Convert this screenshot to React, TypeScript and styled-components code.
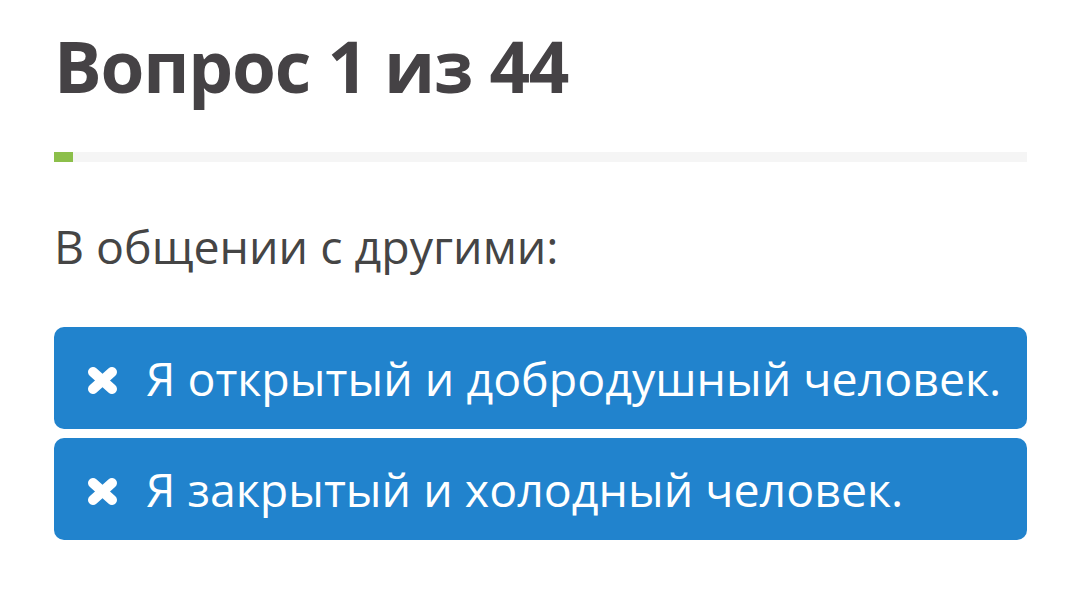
import React from "react";
import styled, { createGlobalStyle } from "styled-components";

const Global = createGlobalStyle`
  html, body { margin: 0; padding: 0; background: #ffffff; }
  body { font-family: "Open Sans", "Noto Sans", sans-serif; }
`;

const Page = styled.div`
  padding: 23px 53px 0 54px;
  display: flex;
  flex-direction: column;
`;

const Title = styled.h1`
  margin: 0;
  font-size: 71px;
  font-weight: 700;
  line-height: 86px;
  letter-spacing: -1.2px;
  color: #454245;
`;

const Track = styled.div`
  margin-top: 43px;
  height: 10px;
  background: #f5f5f5;
  display: flex;
`;

const Fill = styled.div`
  height: 100%;
  background: #8cbf4a;
`;

const Question = styled.p`
  margin: 50px 0 0 0;
  font-size: 46.5px;
  font-weight: 400;
  line-height: 68px;
  color: #454545;
`;

const Answers = styled.div`
  margin-top: 47px;
  display: flex;
  flex-direction: column;
  gap: 9px;
`;

const Answer = styled.button`
  height: 102px;
  border: none;
  border-radius: 10px;
  background: #2183cd;
  color: #ffffff;
  display: flex;
  align-items: center;
  padding: 0 0 0 33px;
  font-family: "Open Sans", "Noto Sans", sans-serif;
  font-size: 46.5px;
  font-weight: 400;
  text-align: left;
  cursor: pointer;
`;

const Icon = styled.svg`
  width: 31px;
  height: 29px;
  margin-right: 28px;
  margin-top: 4px;
  flex-shrink: 0;
`;

const CrossIcon = () => (
  <Icon viewBox="0 0 31 29">
    <g stroke="#ffffff" strokeWidth="10" strokeLinecap="round">
      <line x1="6" y1="6" x2="25" y2="23" />
      <line x1="25" y1="6" x2="6" y2="23" />
    </g>
  </Icon>
);

const answers = [
  "Я открытый и добродушный человек.",
  "Я закрытый и холодный человек.",
];

export default function App() {
  const total = 44;
  const current = 1;
  return (
    <Page>
      <Global />
      <Title>
        Вопрос {current} из {total}
      </Title>
      <Track>
        <Fill style={{ width: `${(current / total) * 100 * 0.85}%` }} />
      </Track>
      <Question>В общении с другими:</Question>
      <Answers>
        {answers.map((a) => (
          <Answer key={a}>
            <CrossIcon />
            {a}
          </Answer>
        ))}
      </Answers>
    </Page>
  );
}
